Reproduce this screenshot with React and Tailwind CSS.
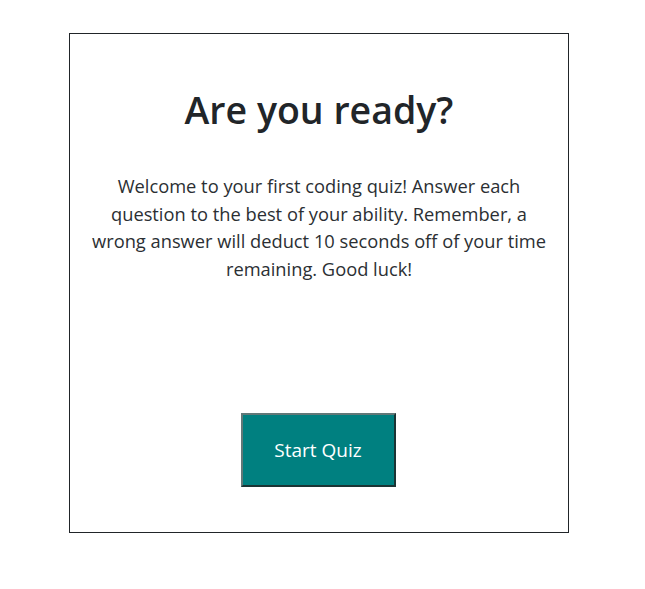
import React from 'react';

const App = () => {
  return (
    <div className="min-h-screen bg-white pt-[33px] pl-[69px] font-['Open_Sans',sans-serif] text-[#212529]">
      <div className="w-[500px] h-[500px] border border-[#212529] flex flex-col items-center px-5">
        <h1 className="mt-[53px] text-[37.5px] leading-[45px] font-semibold">Are you ready?</h1>

        <p className="mt-[40px] text-center text-[18.3px] leading-[27.7px] text-[#2b2f33]">
          Welcome to your first coding quiz! Answer each question to the best of your ability. Remember, a wrong answer will deduct 10 seconds off of your time remaining. Good luck!
        </p>

        <button className="mt-auto mb-[45px] mr-[2px] w-[155px] h-[74px] bg-[#008080] text-white text-[19px] border-2 border-t-[#617878] border-l-[#617878] border-r-[#1b3434] border-b-[#1b3434]">
          Start Quiz
        </button>
      </div>
    </div>
  );
};

export default App;
